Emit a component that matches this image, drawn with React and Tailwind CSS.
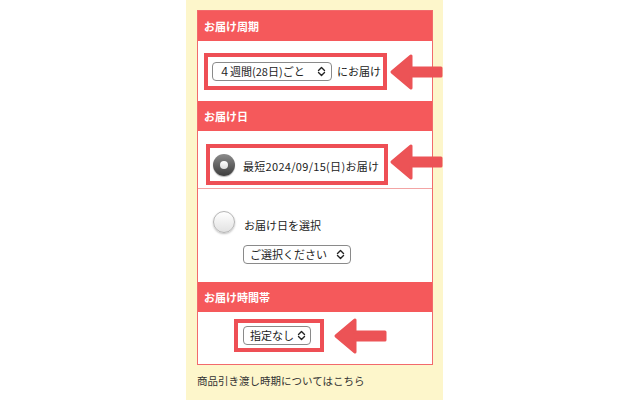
import React from "react";

const font = { fontFamily: '"Noto Sans CJK JP", "Noto Sans", sans-serif' };

function Chevrons() {
  return (
    <svg width="9" height="11" viewBox="0 0 9 11" className="shrink-0">
      <path d="M1.5 4.5 L4.5 1.5 L7.5 4.5 M1.5 6.5 L4.5 9.5 L7.5 6.5" fill="none" stroke="#222" strokeWidth="1.4" strokeLinecap="round" strokeLinejoin="round" />
    </svg>
  );
}

function Select({ label, className }) {
  return (
    <div className={`flex items-center justify-between h-[19px] bg-white border border-[#8a8a8a] rounded-[4px] pl-[6px] pr-[5px] text-[11px] text-[#222] ${className}`}>
      <span>{label}</span>
      <Chevrons />
    </div>
  );
}

function Arrow({ className }) {
  return (
    <svg width="54" height="38" viewBox="0 0 54 38" className={`absolute ${className}`}>
      <polygon points="3,19 22,3 22,15 52,15 52,23 22,23 22,35" fill="#ec5356" stroke="#ec5356" strokeWidth="3" strokeLinejoin="round" />
    </svg>
  );
}

function Header({ children }) {
  return (
    <div className="h-[30px] bg-[#f5595b] flex items-center pl-[6px] text-white text-[11px] font-bold">
      {children}
    </div>
  );
}

function Radio({ checked }) {
  if (checked) {
    return (
      <div className="w-[22px] h-[22px] rounded-full bg-gradient-to-b from-[#8c8c8c] to-[#3e3e3e] flex items-center justify-center shadow-[0_1px_1px_rgba(0,0,0,0.3)]">
        <div className="w-[8px] h-[8px] rounded-full bg-gradient-to-b from-white to-[#dcdcdc]" />
      </div>
    );
  }
  return (
    <div className="w-[22px] h-[22px] rounded-full border border-[#b5b5b5] bg-gradient-to-b from-white to-[#e2e2e2] shadow-[0_1px_2px_rgba(0,0,0,0.25)]" />
  );
}

export default function App() {
  return (
    <div className="w-[630px] h-[400px] bg-white flex" style={font}>
      <div className="relative ml-[186px] w-[257px] h-[400px] bg-[#fdf6cb] pt-[10px]">
        <div className="ml-[11px] w-[236px] border border-[#f26a6c] bg-white">
          <Header>お届け周期</Header>
          <div className="h-[60px] pt-[12px] pl-[6px]">
            <div className="w-[183px] h-[37px] border-4 border-[#ee4f55] flex items-center pl-[4px] gap-[5px]">
              <Select label="４週間(28日)ごと" className="w-[120px]" />
              <span className="text-[11px] text-[#222]">にお届け</span>
            </div>
          </div>
          <Header>お届け日</Header>
          <div className="h-[58px] pt-[13px] pl-[8px] border-b border-[#f3a4a4]">
            <div className="w-[182px] h-[41px] border-4 border-[#ee4f55] flex items-center pl-[3px] gap-[8px]">
              <Radio checked />
              <span className="text-[11px] text-[#222] mt-[3px] tracking-[0.3px]">最短2024/09/15(日)お届け</span>
            </div>
          </div>
          <div className="h-[93px] pt-[21px] pl-[15px]">
            <div className="flex items-center gap-[9px]">
              <Radio />
              <span className="text-[11px] text-[#222] mt-[7px]">お届け日を選択</span>
            </div>
            <Select label="ご選択ください" className="w-[108px] ml-[30px] mt-[11px]" />
          </div>
          <Header>お届け時間帯</Header>
          <div className="h-[52px] pt-[7px] pl-[36px]">
            <div className="w-[90px] h-[33px] border-4 border-[#ee4f55] flex items-center pl-[5px]">
              <Select label="指定なし" className="w-[68px] !pl-[6px] !pr-[4px]" />
            </div>
          </div>
        </div>
        <p className="ml-[11px] mt-[8px] text-[10.5px] text-[#333]">商品引き渡し時期についてはこちら</p>
        <Arrow className="left-[203px] top-[53px]" />
        <Arrow className="left-[203px] top-[143px]" />
        <Arrow className="left-[147px] top-[317px]" />
      </div>
    </div>
  );
}
